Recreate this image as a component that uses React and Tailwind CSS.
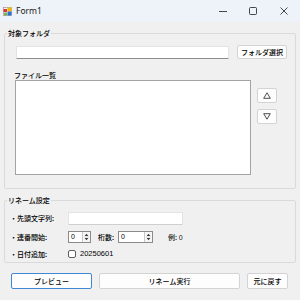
const JP = { fontFamily: '"Noto Sans CJK JP", "Noto Sans", sans-serif', fontWeight: 500 };
const NUM = { fontFamily: '"Liberation Sans", Arial, sans-serif' };

/* ───── Title bar pieces ───── */
const AppIcon = () => (
  <svg width="9" height="9" viewBox="0 0 9 9" className="shrink-0">
    <rect x="0.5" y="0.5" width="8" height="8" fill="#f4f4f4" stroke="#8a8a8a" strokeWidth="0.6" />
    <rect x="0.5" y="2" width="3.5" height="3" fill="#e0332b" />
    <rect x="4.5" y="0.5" width="4" height="4" fill="#f2b705" />
    <rect x="4.5" y="4.5" width="4" height="4" fill="#2b6fd6" />
    <rect x="1" y="5.5" width="3" height="3" fill="#7cb342" />
  </svg>
);

const CaptionButtons = () => (
  <div className="ml-auto flex items-center h-full">
    <div className="w-[30px] h-full flex items-center justify-center">
      <svg width="8" height="8" viewBox="0 0 8 8"><line x1="0" y1="4.5" x2="8" y2="4.5" stroke="#1a1a1a" strokeWidth="0.8" /></svg>
    </div>
    <div className="w-[30px] h-full flex items-center justify-center">
      <svg width="8" height="8" viewBox="0 0 8 8"><rect x="0.5" y="0.5" width="7" height="7" rx="1" fill="none" stroke="#1a1a1a" strokeWidth="0.8" /></svg>
    </div>
    <div className="w-[32px] h-full flex items-center justify-center">
      <svg width="8" height="8" viewBox="0 0 8 8"><path d="M0.5 0.5 L7.5 7.5 M7.5 0.5 L0.5 7.5" stroke="#1a1a1a" strokeWidth="0.8" /></svg>
    </div>
  </div>
);

/* ───── Controls ───── */
const TextBox = ({ className = '' }) => (
  <div className={`bg-white border border-[#e3e3e3] border-b-[#8c8c8c] rounded-[1px] ${className}`} />
);

const Btn = ({ children, className = '', primary = false }) => (
  <div
    className={`flex items-center justify-center bg-[#fdfdfd] rounded-[2px] text-[7px] leading-none text-black border ${
      primary ? 'border-[#3f86d4]' : 'border-[#d3d3d3]'
    } ${className}`}
    style={JP}
  >
    {children}
  </div>
);

const Spin = () => (
  <div className="w-[8px] h-full border-l border-[#c8c8c8] bg-[#f6f6f6] flex items-center justify-center">
    <svg width="5" height="8" viewBox="0 0 5 8">
      <path d="M2.5 0.8 L4.3 3 L0.7 3 Z" fill="#333" />
      <line x1="0" y1="4" x2="5" y2="4" stroke="#bdbdbd" strokeWidth="0.5" />
      <path d="M2.5 7.2 L4.3 5 L0.7 5 Z" fill="#333" />
    </svg>
  </div>
);

const Numeric = ({ className = '' }) => (
  <div className={`flex bg-white border border-[#8a8a8a] h-[12px] ${className}`}>
    <span className="flex-1 pl-[2px] text-[7px] leading-[10px]" style={NUM}>0</span>
    <Spin />
  </div>
);

const GroupBox = ({ title, className = '', children }) => (
  <fieldset className={`border border-[#dadada] rounded-[2px] ${className}`}>
    <legend className="ml-[2px] px-[1px] text-[7px] leading-[8px] text-black" style={JP}>{title}</legend>
    {children}
  </fieldset>
);

export default function App() {
  return (
    <div className="w-[300px] h-[300px] overflow-hidden bg-[#f0f0f0] flex flex-col text-black">
      {/* ── Title bar ── */}
      <div className="h-[22px] shrink-0 flex items-center bg-[#eef3f9]">
        <div className="ml-[3px]"><AppIcon /></div>
        <span className="ml-[4px] text-[8.5px] leading-none text-[#1a1a1a]" style={{ fontFamily: '"Noto Sans", "Open Sans", sans-serif' }}>Form1</span>
        <CaptionButtons />
      </div>

      {/* ── 対象フォルダ ── */}
      <GroupBox title="対象フォルダ" className="ml-[4px] mt-[7px] w-[292px]">
        <div className="pl-[10px] pb-[13px]">
          <div className="mt-[8px] flex items-center h-[14px]">
            <TextBox className="ml-[1px] w-[213px] h-[13px]" />
            <Btn className="ml-[8px] w-[50px] h-[14px]">フォルダ選択</Btn>
          </div>
          <div className="mt-[12px] -ml-[1px] text-[7px] leading-[8px]" style={JP}>ファイル一覧</div>
          <div className="mt-[1px] flex">
            <div className="w-[236px] h-[95px] bg-white border border-[#a3a3a3]" />
            <div className="ml-[6px] pt-[8px] flex flex-col gap-[6px]">
              <Btn className="w-[20px] h-[15px]">
                <svg width="8" height="7" viewBox="0 0 8 7"><path d="M4 0.8 L7.3 6.3 L0.7 6.3 Z" fill="none" stroke="#222" strokeWidth="0.8" /></svg>
              </Btn>
              <Btn className="w-[20px] h-[15px]">
                <svg width="8" height="7" viewBox="0 0 8 7"><path d="M4 6.2 L7.3 0.7 L0.7 0.7 Z" fill="none" stroke="#222" strokeWidth="0.8" /></svg>
              </Btn>
            </div>
          </div>
        </div>
      </GroupBox>

      {/* ── リネーム設定 ── */}
      <GroupBox title="リネーム設定" className="ml-[4px] mt-[7px] w-[292px]">
        <div className="pl-[5px] pb-[4px] text-[7px]" style={JP}>
          <div className="mt-[8px] flex items-center h-[13px]">
            <span className="w-[58px] leading-none">・先頭文字列:</span>
            <TextBox className="w-[115px] h-[13px] border-b-[#cfcfcf]" />
          </div>
          <div className="mt-[6px] flex items-center h-[12px]">
            <span className="w-[58px] leading-none">・連番開始:</span>
            <Numeric className="w-[23px]" />
            <span className="ml-[7px] w-[20px] leading-none">桁数:</span>
            <Numeric className="w-[35px]" />
            <span className="ml-[15px] leading-none text-[#222]">例: <span style={NUM}>0</span></span>
          </div>
          <div className="mt-[7px] flex items-center h-[8px]">
            <span className="w-[58px] leading-none">・日付追加:</span>
            <div className="w-[8px] h-[8px] bg-white border border-[#5f5f5f] rounded-[2px]" />
            <span className="ml-[4px] text-[7.5px] leading-none" style={NUM}>20250601</span>
          </div>
        </div>
      </GroupBox>

      {/* ── Action buttons ── */}
      <div className="mt-[10px] ml-[11px] flex h-[16px] gap-[7px]">
        <Btn primary className="w-[81px] h-full">プレビュー</Btn>
        <Btn className="w-[141px] h-full">リネーム実行</Btn>
        <Btn className="w-[41px] h-full">元に戻す</Btn>
      </div>
    </div>
  );
}
